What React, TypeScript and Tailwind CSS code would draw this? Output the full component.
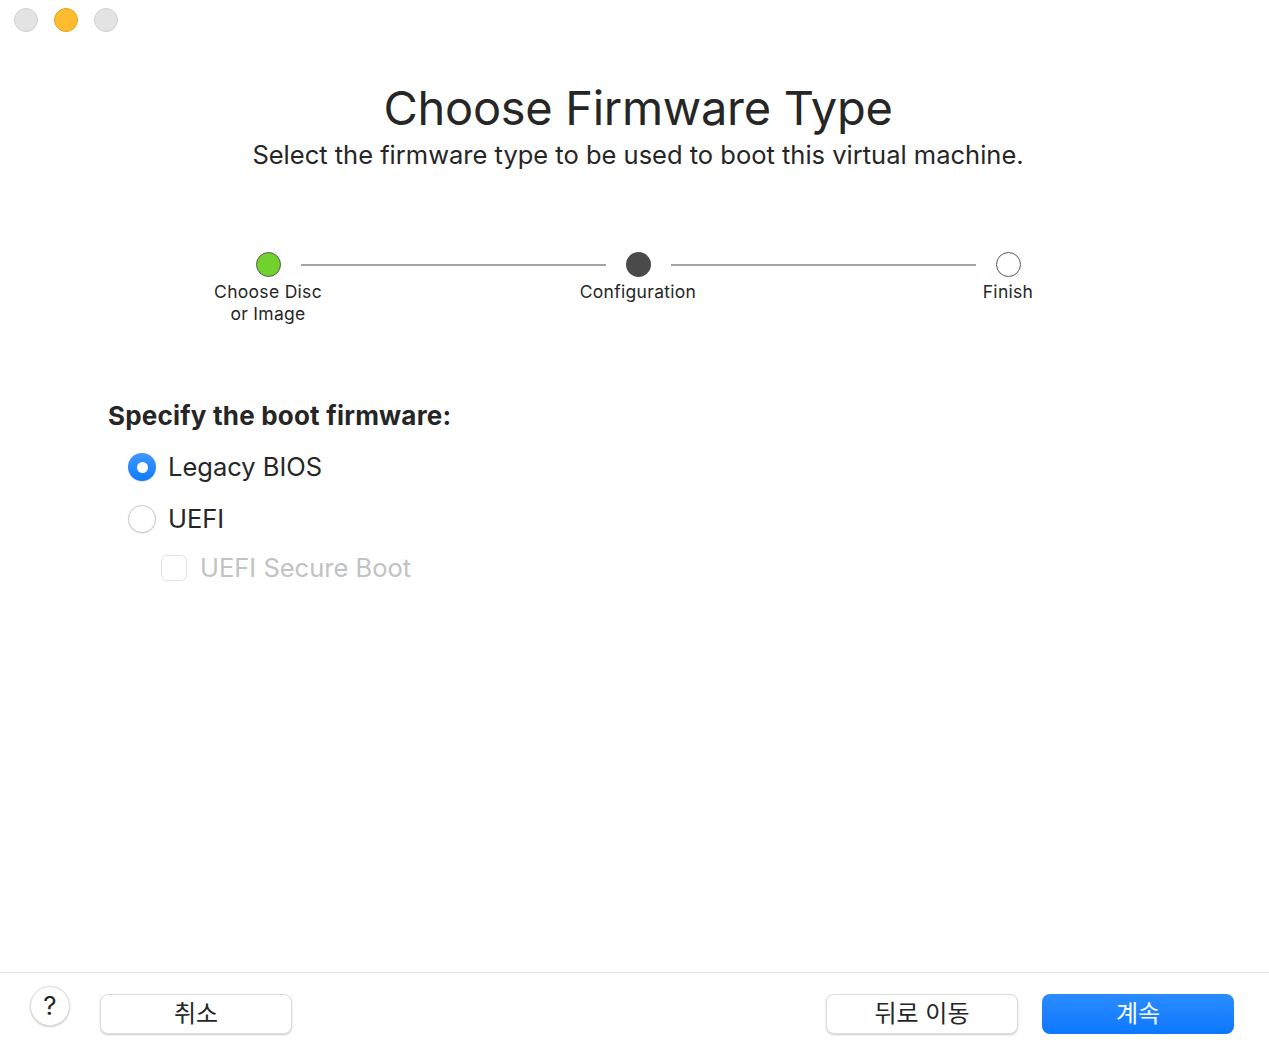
import { useState } from "react";

const font = { fontFamily: "Inter, 'Noto Sans CJK KR', sans-serif" };

function TrafficLight({ color }: { color: "gray" | "yellow" }) {
  return (
    <div
      className={
        color === "yellow"
          ? "w-[24px] h-[24px] rounded-full bg-[#febc2e] border border-[#e1a325]"
          : "w-[24px] h-[24px] rounded-full bg-[#e3e3e3] border border-[#cfcfcf]"
      }
    />
  );
}

function Radio({ checked, label, onClick }: { checked: boolean; label: string; onClick: () => void }) {
  return (
    <button onClick={onClick} className="flex items-center gap-[12px] h-[28px]">
      {checked ? (
        <span className="w-[28px] h-[28px] rounded-full bg-gradient-to-b from-[#3c97ff] to-[#0a7bff] flex items-center justify-center shadow-[0_0.5px_1px_rgba(0,0,0,0.2)]">
          <span className="w-[11px] h-[11px] rounded-full bg-white" />
        </span>
      ) : (
        <span className="w-[28px] h-[28px] rounded-full bg-white border border-[#cdcdcd] shadow-[0_0.5px_1px_rgba(0,0,0,0.15)]" />
      )}
      <span className="text-[25.5px] text-[#262626] leading-none">{label}</span>
    </button>
  );
}

export default function App() {
  const [fw, setFw] = useState<"bios" | "uefi">("bios");

  return (
    <div className="w-full h-[1056px] bg-white flex flex-col relative overflow-hidden" style={font}>
      {/* Title bar */}
      <div className="flex items-center gap-[16px] pl-[14px] h-[40px]">
        <TrafficLight color="gray" />
        <TrafficLight color="yellow" />
        <TrafficLight color="gray" />
      </div>

      {/* Header */}
      <div className="flex flex-col items-center mt-[38px] pl-[7px]">
        <h1 className="text-[47px] leading-[60px] text-[#262626] tracking-[-0.3px]">Choose Firmware Type</h1>
        <p className="text-[25.5px] leading-[32px] text-[#262626] mt-[1px]">
          Select the firmware type to be used to boot this virtual machine.
        </p>
      </div>

      {/* Stepper */}
      <div className="flex flex-col items-center mt-[81px] pl-[7px]">
        <div className="flex items-center w-[765px]">
          <span className="w-[25px] h-[25px] rounded-full bg-[#72d22d] border border-[#5a5a5a]" />
          <span className="flex-1 h-[2px] bg-[#a3a3a3] mx-[20px]" />
          <span className="w-[25px] h-[25px] rounded-full bg-[#4a4a4a]" />
          <span className="flex-1 h-[2px] bg-[#a3a3a3] mx-[20px]" />
          <span className="w-[25px] h-[25px] rounded-full bg-white border border-[#5a5a5a]" />
        </div>
        <div className="grid grid-cols-[370px_370px_370px] text-center text-[17.5px] tracking-[0.3px] leading-[22px] text-[#262626] mt-[4px]">
          <div>
            Choose Disc
            <br />
            or Image
          </div>
          <div>Configuration</div>
          <div>Finish</div>
        </div>
      </div>

      {/* Firmware options */}
      <div className="pl-[108px] mt-[76px] flex flex-col">
        <h2 className="text-[26px] leading-[30px] font-bold text-[#262626] tracking-[0.2px]">Specify the boot firmware:</h2>
        <div className="pl-[20px] mt-[22px] flex flex-col gap-[24px]">
          <Radio checked={fw === "bios"} label="Legacy BIOS" onClick={() => setFw("bios")} />
          <Radio checked={fw === "uefi"} label="UEFI" onClick={() => setFw("uefi")} />
        </div>
        <div className="pl-[53px] mt-[22px] flex items-center gap-[13px]">
          <span className="w-[26px] h-[26px] rounded-[6px] border border-[#e2e2e2] bg-white" />
          <span className="text-[25.5px] leading-none text-[#c2c2c2]">UEFI Secure Boot</span>
        </div>
      </div>

      <div className="flex-1" />

      {/* Footer */}
      <div className="border-t border-[#e3e3e3] h-[84px] flex items-start pt-[13px] px-[30px]">
        <button className="w-[40px] h-[40px] rounded-full bg-white border border-[#dcdcdc] shadow-[0_1px_2px_rgba(0,0,0,0.2)] text-[26px] text-[#262626] flex items-center justify-center leading-none">
          ?
        </button>
        <button className="ml-[30px] mt-[8px] w-[192px] h-[40px] rounded-[8px] bg-white border border-[#dcdcdc] shadow-[0_1px_2px_rgba(0,0,0,0.2)] text-[24px] text-[#262626] leading-none">
          취소
        </button>
        <div className="flex-1" />
        <button className="mt-[8px] w-[192px] h-[40px] rounded-[8px] bg-white border border-[#dcdcdc] shadow-[0_1px_2px_rgba(0,0,0,0.2)] text-[24px] text-[#262626] leading-none">
          뒤로 이동
        </button>
        <button className="ml-[24px] mr-[5px] mt-[8px] w-[192px] h-[40px] rounded-[8px] bg-gradient-to-b from-[#2a8cff] to-[#0a78ff] text-[24px] text-white leading-none">
          계속
        </button>
      </div>
    </div>
  );
}
